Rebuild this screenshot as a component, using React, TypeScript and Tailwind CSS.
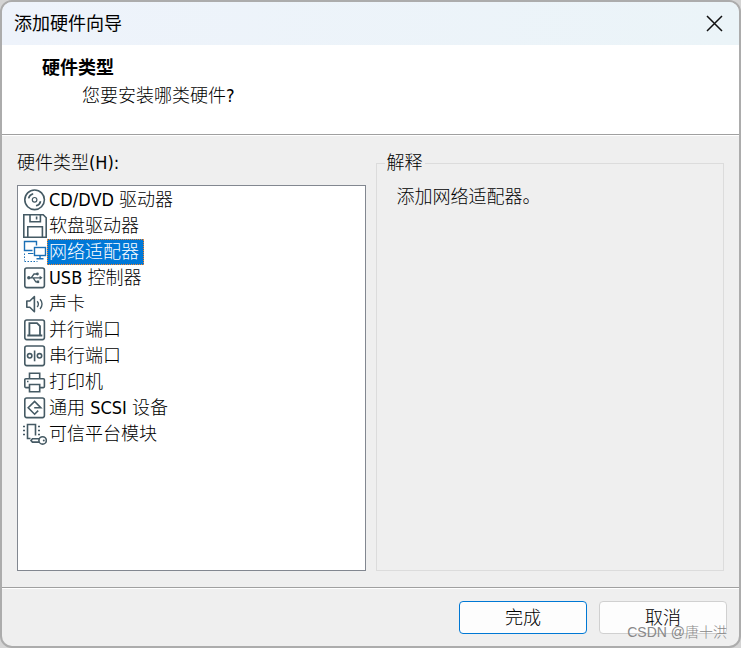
import { useState, type ReactNode } from "react";

interface IconProps {
  children: ReactNode;
  className?: string;
}

function Icon({ children, className = "text-[#455a64]" }: IconProps) {
  return (
    <svg width="24" height="26" viewBox="0 0 24 26" fill="none" stroke="currentColor" strokeWidth="1.6" aria-hidden="true" className={`shrink-0 ${className}`}>
      {children}
    </svg>
  );
}

function Frame() {
  return <rect x="1.8" y="3" width="19.6" height="19.6" rx="2" />;
}

const DiscIcon = (
  <Icon>
    <circle cx="11.6" cy="12.8" r="9.8" />
    <circle cx="11.6" cy="12.8" r="2.3" strokeWidth="1.2" />
    <path d="M5.6 11.4a6.2 6.2 0 0 1 4.6-4.6M17.6 14.2a6.2 6.2 0 0 1-4.6 4.6" />
  </Icon>
);

const FloppyIcon = (
  <Icon>
    <path d="M.8 1.8h19.4l3 3v19.4H.8z" />
    <path d="M7 1.8v7h10.4v-7M13.6 3.5v3" />
    <path d="M4.8 24.2V13.8h14.6v10.4" />
  </Icon>
);

const NetworkIcon = (
  <Icon className="text-[#1a6fb5]">
    <path d="M9.5 11.5H1.5v-9h12v4" strokeWidth="1.4" />
    <rect x="11.5" y="8.5" width="11" height="8" strokeWidth="1.4" />
    <path d="M17 16.5v3M13.5 19.8h7" strokeWidth="1.4" />
    <path d="M5 14.5h5.500" strokeWidth="1.2" />
    <path d="M1.500 14.500v7M1.500 22.500h13" strokeDasharray="1.5 1.5" strokeWidth="1" />
  </Icon>
);

const UsbIcon = (
  <Icon>
    <Frame />
    <circle cx="5.8" cy="12.8" r="1.7" fill="currentColor" stroke="none" />
    <path d="M5.8 12.8h12M8.2 12.8L11 9h3M10.2 12.8l2.6 4H15" strokeWidth="1.3" />
    <path d="M16.6 10.8l3 2-3 2z" fill="currentColor" stroke="none" />
    <circle cx="14.4" cy="9" r="1.4" fill="currentColor" stroke="none" />
    <path d="M13.6 15.5h2.6v2.6h-2.6z" fill="currentColor" stroke="none" />
  </Icon>
);

const SoundIcon = (
  <Icon>
    <path d="M3.8 10h3l4.6-4.5v15.2l-4.6-4.5h-3z" strokeLinejoin="round" />
    <path d="M14.2 10.2c1.3 1.6 1.3 4.2 0 5.8M17 8.3c2.7 2.6 2.7 7 0 9.600" strokeWidth="1.4" />
  </Icon>
);

const ParallelIcon = (
  <Icon>
    <Frame />
    <path d="M6.4 18.4V6.2h7.600l3 3v9.200" strokeWidth="1.8" />
    <path d="M4.3 18.5h15" strokeWidth="2" />
  </Icon>
);

const SerialIcon = (
  <Icon>
    <Frame />
    <circle cx="6.7" cy="12.8" r="2.2" />
    <circle cx="16.5" cy="12.8" r="2.2" />
    <path d="M11.6 7.5v10.8" />
  </Icon>
);

const PrinterIcon = (
  <Icon>
    <path d="M6.5 9.8V4.3h10.2v5.5" />
    <path d="M6.5 18.6H2.8a1 1 0 0 1-1-1v-6.8a1 1 0 0 1 1-1h17.6a1 1 0 0 1 1 1v6.8a1 1 0 0 1-1 1h-3.7" />
    <path d="M6.5 15.5h10.2v7.3H6.5z" />
    <path d="M4 12.5h1.5" strokeWidth="1.4" />
  </Icon>
);

const ScsiIcon = (
  <Icon>
    <Frame />
    <path d="M15.2 15.600l-3.600 3.600-6.400-6.400 6.400-6.400 6.200 6.400h-6.600" />
  </Icon>
);

const TpmIcon = (
  <Icon>
    <path d="M7.500 17.500H4.500V3.500h8v11" />
    <path d="M0 5.500h2M0 9.500h2M0 13.500h2M15 5.500h2M15 9.500h2M15 13.500h2" strokeWidth="1.5" />
    <circle cx="19.600" cy="19.400" r="3.700" />
    <circle cx="20.800" cy="19.400" r="1" fill="currentColor" stroke="none" />
    <path d="M16.200 17.700H9.400L8 19.400l1.400 1.700h6.800" />
  </Icon>
);

const hardware = [
  { name: "CD/DVD 驱动器", icon: DiscIcon },
  { name: "软盘驱动器", icon: FloppyIcon },
  { name: "网络适配器", icon: NetworkIcon },
  { name: "USB 控制器", icon: UsbIcon },
  { name: "声卡", icon: SoundIcon },
  { name: "并行端口", icon: ParallelIcon },
  { name: "串行端口", icon: SerialIcon },
  { name: "打印机", icon: PrinterIcon },
  { name: "通用 SCSI 设备", icon: ScsiIcon },
  { name: "可信平台模块", icon: TpmIcon },
];

function TitleBar() {
  return (
    <header className="flex h-[43px] items-center justify-between bg-linear-to-r from-[#eef3fb] to-[#ebf4f8] pr-4 pl-3">
      <h1 className="text-lg font-normal">添加硬件向导</h1>
      <button type="button" aria-label="关闭">
        <svg width="17" height="17" viewBox="0 0 17 17" fill="none" stroke="#111" strokeWidth="1.5">
          <path d="M1 1l15 15M16 1L1 16" />
        </svg>
      </button>
    </header>
  );
}

export default function App() {
  const [selected, setSelected] = useState("网络适配器");

  return (
    <div className="flex min-h-screen bg-[#d4d4d4] font-['DejaVu_Sans_Condensed','Noto_Sans_CJK_SC',sans-serif] text-lg font-light text-black">
      <main className="relative flex flex-1 flex-col overflow-hidden rounded-xl border-2 border-[#acacac] bg-[#efefef]">
        <TitleBar />

        <section className="border-b border-[#a0a0a0] bg-white pt-[9px] pb-6 pl-10 leading-7">
          <h2 className="font-bold">硬件类型</h2>
          <p className="pl-10">您要安装哪类硬件?</p>
        </section>

        <div className="grid flex-1 grid-cols-2 gap-2.5 border-t border-white px-[15px] pt-[15px] pb-4">
          <div className="flex flex-col gap-2.5">
            <span id="hardware-label" className="leading-6">硬件类型(H):</span>
            <div role="listbox" aria-labelledby="hardware-label" className="flex-1 border border-[#828790] bg-white py-px pl-[5px]">
              {hardware.map(({ name, icon }) => (
                <button
                  key={name}
                  type="button"
                  role="option"
                  aria-selected={name === selected}
                  onClick={() => setSelected(name)}
                  className="flex h-[26px] w-full items-center text-left"
                >
                  {icon}
                  <span
                    className={
                      name === selected
                        ? "border border-dotted border-[#ff8728] bg-[#0078d7] px-1 pl-px leading-6 text-white"
                        : "border border-transparent px-1 pl-px leading-6"
                    }
                  >
                    {name}
                  </span>
                </button>
              ))}
            </div>
          </div>

          <fieldset className="min-w-0 border border-[#dcdcdc] px-2">
            <legend className="px-0.5 leading-6">解释</legend>
            <p className="px-3 pt-2.5 leading-6">添加{selected}。</p>
          </fieldset>
        </div>

        <footer className="border-t border-[#a0a0a0]">
          <div className="flex justify-end gap-3 border-t border-white p-3">
            <button type="button" className="h-[33px] w-32 rounded border border-[#0078d4] bg-[#fdfdfd]">完成</button>
            <button type="button" className="h-[33px] w-32 rounded border border-[#d0d0d0] bg-[#fdfdfd]">取消</button>
          </div>
        </footer>

        <span className="pointer-events-none absolute right-3 bottom-1 font-['Liberation_Sans','Noto_Sans_CJK_SC',sans-serif] text-sm leading-5 text-[#888888]">
          CSDN @唐十洪
        </span>
      </main>
    </div>
  );
}
